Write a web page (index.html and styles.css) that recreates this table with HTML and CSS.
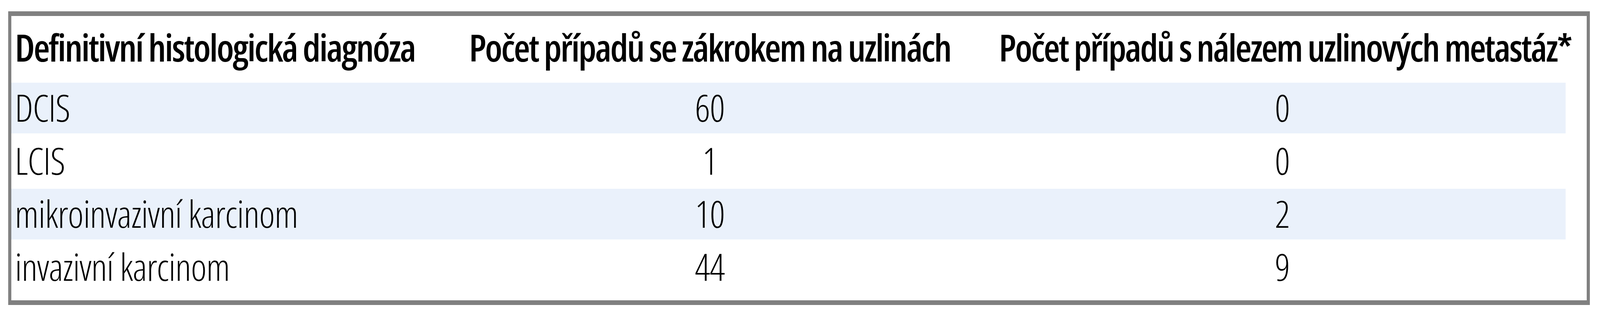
FILE: index.html
```html
<!DOCTYPE html>
<html lang="cs">
<head>
<meta charset="utf-8">
<title>Tabulka</title>
<link rel="stylesheet" href="styles.css">
</head>
<body>
<div class="frame">
  <div class="table">
    <div class="row head">
      <div class="cell first">Definitivní histologická diagnóza</div>
      <div class="cell num">Počet případů se zákrokem na uzlinách</div>
      <div class="cell num">Počet případů s nálezem uzlinových metastáz*</div>
    </div>
    <div class="row body odd">
      <div class="cell first">DCIS</div>
      <div class="cell num">60</div>
      <div class="cell num">0</div>
    </div>
    <div class="row body">
      <div class="cell first">LCIS</div>
      <div class="cell num">1</div>
      <div class="cell num">0</div>
    </div>
    <div class="row body odd">
      <div class="cell first">mikroinvazivní karcinom</div>
      <div class="cell num">10</div>
      <div class="cell num">2</div>
    </div>
    <div class="row body">
      <div class="cell first">invazivní karcinom</div>
      <div class="cell num">44</div>
      <div class="cell num">9</div>
    </div>
  </div>
</div>
</body>
</html>
```
FILE: styles.css
```css
html, body {
  margin: 0;
  padding: 0;
  background: #ffffff;
}

.frame {
  box-sizing: border-box;
  margin: 29px 0 0 21px;
  width: 4049px;
  height: 753px;
  border-style: solid;
  border-color: #808080;
  border-width: 12px 8px;
  background: #ffffff;
}

.table {
  width: 3979px;
  display: flex;
  flex-direction: column;
  row-gap: 6.5px;
  font-family: "Open Sans", "Noto Sans", sans-serif;
  font-size: 96px;
  font-stretch: 75%;
  color: #000000;
}

.row {
  display: grid;
  grid-template-columns: 1048px 1480px 1451px;
}

.head {
  height: 164.5px;
  line-height: 159.6px;
  font-weight: 600;
  letter-spacing: -3.3px;
}

.body {
  height: 129.5px;
  line-height: 125.6px;
  font-weight: 350;
  letter-spacing: -1px;
}

.odd {
  background: #eaf1fb;
}

.cell {
  white-space: nowrap;
}

.first {
  padding-left: 9px;
}

.num {
  text-align: center;
}
```
